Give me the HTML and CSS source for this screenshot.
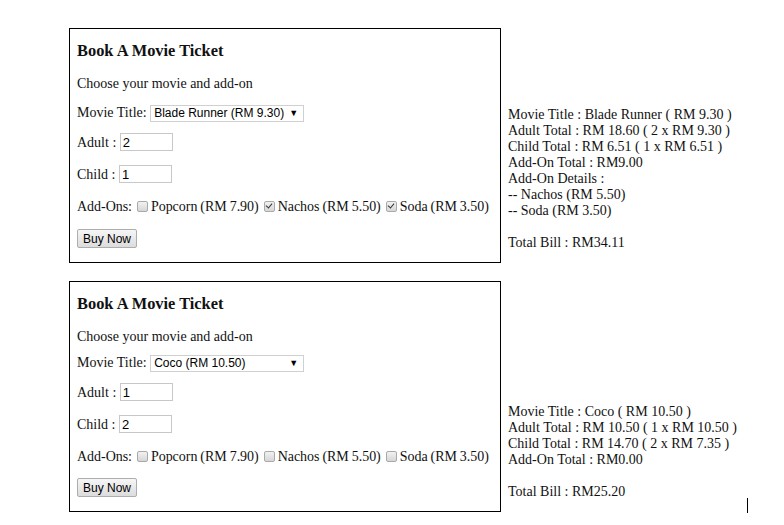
FILE: index.html
```html
<!DOCTYPE html>
<html>
<head>
<meta charset="utf-8">
<link rel="stylesheet" href="styles.css">
</head>
<body>
<div class="page">
  <div class="booking">
    <form class="ticket-form">
      <h3 class="title">Book A Movie Ticket</h3>
      <p class="row row-intro">Choose your movie and add-on</p>
      <p class="row row-movie">Movie Title: <span class="select">Blade Runner (RM 9.30)<span class="arrow">&#9660;</span></span></p>
      <p class="row row-adult">Adult : <input class="num" type="text" value="2"></p>
      <p class="row row-child">Child : <input class="num" type="text" value="1"></p>
      <p class="row row-addons">Add-Ons: <input type="checkbox" class="cb"> Popcorn (RM 7.90) <input type="checkbox" class="cb" checked> Nachos (RM 5.50) <input type="checkbox" class="cb" checked> Soda (RM 3.50)</p>
      <p class="row row-last"><button type="button" class="btn">Buy Now</button></p>
    </form><div class="result">Movie Title : Blade Runner ( RM 9.30 )<br>Adult Total : RM 18.60 ( 2 x RM 9.30 )<br>Child Total : RM 6.51 ( 1 x RM 6.51 )<br>Add-On Total : RM9.00<br>Add-On Details :<br>-- Nachos (RM 5.50)<br>-- Soda (RM 3.50)<br><br>Total Bill : RM34.11</div>
  </div>
  <div class="booking">
    <form class="ticket-form compact">
      <h3 class="title">Book A Movie Ticket</h3>
      <p class="row row-intro">Choose your movie and add-on</p>
      <p class="row row-movie">Movie Title: <span class="select">Coco (RM 10.50)<span class="arrow">&#9660;</span></span></p>
      <p class="row row-adult">Adult : <input class="num" type="text" value="1"></p>
      <p class="row row-child">Child : <input class="num" type="text" value="2"></p>
      <p class="row row-addons">Add-Ons: <input type="checkbox" class="cb"> Popcorn (RM 7.90) <input type="checkbox" class="cb"> Nachos (RM 5.50) <input type="checkbox" class="cb"> Soda (RM 3.50)</p>
      <p class="row row-last"><button type="button" class="btn">Buy Now</button></p>
    </form><div class="result">Movie Title : Coco ( RM 10.50 )<br>Adult Total : RM 10.50 ( 1 x RM 10.50 )<br>Child Total : RM 14.70 ( 2 x RM 7.35 )<br>Add-On Total : RM0.00<br><br>Total Bill : RM25.20</div>
  </div>
  <span class="caret"></span>
</div>
</body>
</html>
```
FILE: styles.css
```css
html, body {
  margin: 0;
  padding: 0;
  background: #fff;
}
body {
  font-family: "Liberation Serif", "Times New Roman", serif;
  font-size: 14px;
  color: #111;
}
.page {
  position: relative;
  padding: 28px 0 0 69px;
  height: 497px;
}
.booking {
  margin-bottom: 18px;
  white-space: nowrap;
}
.ticket-form {
  display: inline-block;
  vertical-align: baseline;
  width: 416px;
  border: 1px solid #000;
  padding: 0 7px;
  white-space: normal;
}
.title {
  font-size: 16.4px;
  margin: 12px 0 0;
  line-height: 19px;
}
.row {
  margin: 0;
  line-height: 16px;
}
.row-intro { margin-top: 16px; }
.row-movie { margin-top: 13px; }
.row-adult { margin-top: 11px; }
.row-child { margin-top: 14px; }
.row-addons {
  margin-top: 16px;
  white-space: nowrap;
  letter-spacing: -0.03px;
  word-spacing: -0.5px;
}
.row-last { margin-top: 14px; margin-bottom: 14px; }
.compact .row-movie { margin-top: 10px; }
.compact .row-last { margin-top: 13px; }
.select {
  display: inline-block;
  box-sizing: border-box;
  width: 154px;
  height: 17px;
  border: 1px solid #d0d0d0;
  background: #fff;
  font-family: "Liberation Sans", Arial, sans-serif;
  font-size: 12px;
  line-height: 15px;
  padding-left: 3px;
  position: relative;
  vertical-align: baseline;
  color: #000;
}
.arrow {
  position: absolute;
  right: 5px;
  top: 0;
  font-size: 9px;
  line-height: 15px;
}
.num {
  box-sizing: border-box;
  width: 53px;
  height: 18px;
  border: 1px solid #c8c8c8;
  padding: 0 2px;
  margin: 0;
  font-family: "Liberation Sans", Arial, sans-serif;
  font-size: 13px;
  color: #000;
}
.cb {
  appearance: none;
  -webkit-appearance: none;
  width: 11px;
  height: 11px;
  margin: 0 0 0 2px;
  border: 1px solid #a9a9a9;
  border-radius: 2px;
  background: linear-gradient(#f2f2f2, #d6d6d6);
  position: relative;
  vertical-align: -1px;
  box-sizing: border-box;
}
.cb:checked::after {
  content: "";
  position: absolute;
  left: 2px;
  top: 0;
  width: 3px;
  height: 5px;
  border: solid #333;
  border-width: 0 1.5px 1.5px 0;
  transform: rotate(40deg);
}
.btn {
  font-family: "Liberation Sans", Arial, sans-serif;
  font-size: 12px;
  height: 19px;
  padding: 0 5px;
  border: 1px solid #adadad;
  border-radius: 2px;
  background: linear-gradient(#f6f6f6, #dcdcdc);
  color: #000;
  line-height: 16px;
}
.result {
  display: inline-block;
  vertical-align: -4px;
  margin-left: 7px;
  line-height: 16px;
}
.caret {
  position: absolute;
  left: 747px;
  top: 498px;
  width: 1px;
  height: 15px;
  background: #000;
}
```
